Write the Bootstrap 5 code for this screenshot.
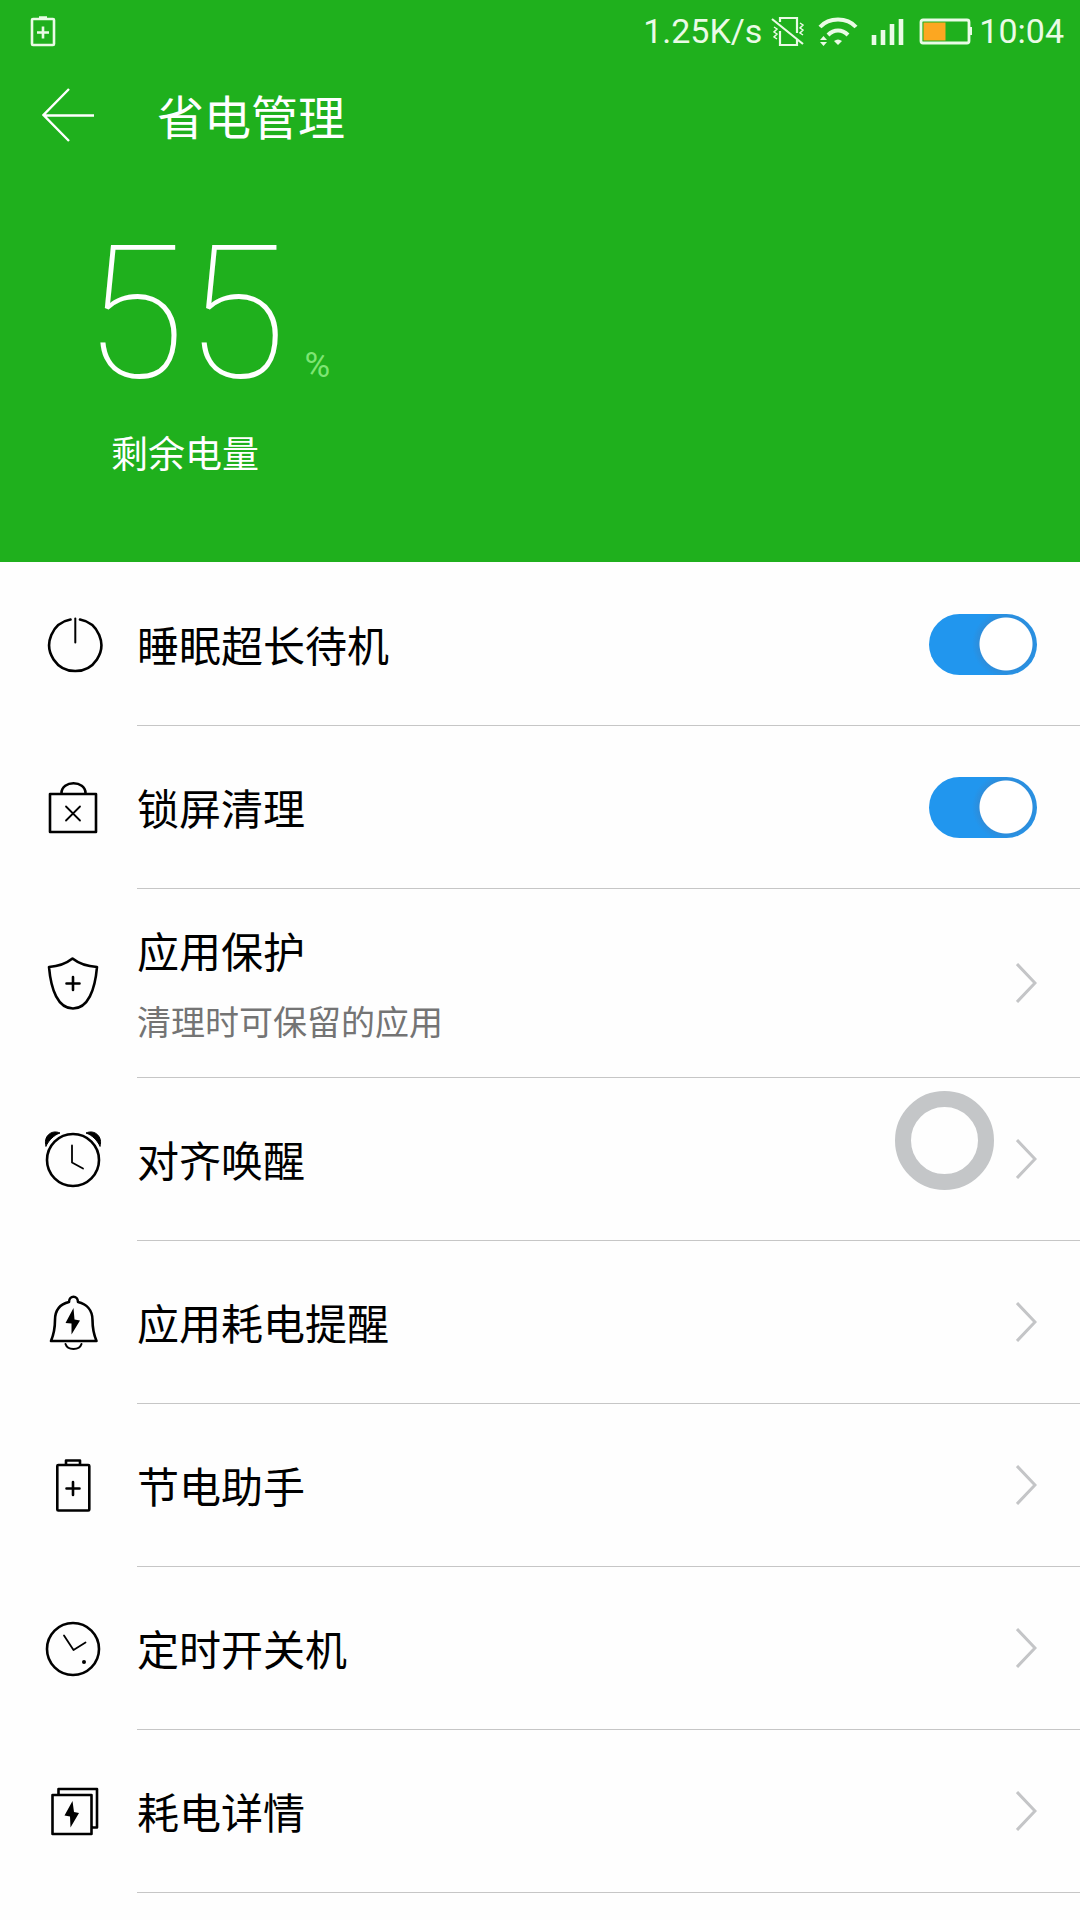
<!DOCTYPE html>
<html lang="zh-CN">
<head>
<meta charset="utf-8">
<meta name="viewport" content="width=device-width, initial-scale=1">
<title>省电管理</title>
<link href="https://cdn.jsdelivr.net/npm/bootstrap@5.3.0/dist/css/bootstrap.min.css" rel="stylesheet">
<style>
  body { font-family: "Noto Sans CJK SC", sans-serif; background: #fefefe; color: #000; }
  svg { display: block; flex: none; fill: none; stroke: currentColor; }
  .power-head { background: #1fb01d; color: #fff; }
  .status-bar { height: 62px; padding: 0 16px 0 30px; font-family: Roboto, sans-serif; font-size: 34px; line-height: 40px; color: #eafbe6; }
  .vibrate { margin-left: 7px; }
  .wifi { margin-left: 10px; }
  .signal { margin-left: 12px; }
  .battery { margin: 0 6px 0 14px; }
  .title-bar { height: 106px; padding-left: 42px; gap: 63px; }
  .title-bar h1 { font-size: 47px; line-height: 64px; }
  .summary { padding: 53px 84px 84px; font-family: Roboto, sans-serif; }
  .level { font-size: 185px; line-height: 185px; font-weight: 100; }
  .percent { font-size: 35px; line-height: 40px; color: #7ee573; margin-left: 18px; }
  .caption-text { font-family: "Noto Sans CJK SC", sans-serif; font-size: 37px; line-height: 52px; margin-top: 20px; padding-left: 27px; }
  .settings { padding-top: 1px; }
  .setting { padding-left: 43px; gap: 34px; color: #000; text-decoration: none; }
  .setting-body { min-height: 163px; padding: 27px 43px 27px 0; border-bottom: 1px solid #c6c6c6; }
  .setting-name { font-size: 42px; line-height: 68px; }
  .setting-note { font-size: 34px; line-height: 50px; padding: 12px 0 4px; color: #747474; }
  .icon { width: 60px; height: 60px; margin-bottom: 1px; stroke-width: 2.6; stroke-linecap: round; stroke-linejoin: round; }
  .chevron { color: #c4c5c7; stroke-width: 3; }
  .form-check-input.toggle, .form-check-input.toggle:checked {
    width: 108px; height: 61px; margin: 0; border: 0; border-radius: 31px; flex: none; box-shadow: none;
    background: radial-gradient(circle at 77px 30px, #fff 26px, #2d8ddb 27px, #2196ee 34px) #2196ee;
  }
  .touch-ball { position: absolute; top: 1091px; right: 86px; width: 99px; height: 99px; padding: 0; border: 16px solid #c4c6c8; border-radius: 50%; background: #fefefe; }
</style>
</head>
<body class="position-relative">
<header class="power-head">
  <div class="status-bar d-flex align-items-center justify-content-between">
    <svg width="26" height="32" viewBox="0 0 26 32" stroke-width="2.6"><rect x="2" y="4" width="22" height="26" rx="1"/><path d="M9 2.500h8M7 17.500h12M13 11.500v12" /></svg>
    <div class="d-flex align-items-center">
      <span>1.25K/s</span>
      <svg class="vibrate" width="38" height="34" viewBox="0 0 38 34" stroke-width="2.2"><path d="M11 8V4h17v15M28 25v6H11V17M3 5l31 25"/><path stroke-width="1.500" d="M5 13l3 2-3 3 3 2-3 3 3 2M31 9l3 2-3 3 3 2-3 3 3 2"/></svg>
      <svg class="wifi" width="42" height="34" viewBox="0 0 42 34" stroke-width="4"><path d="M3 13c9-10 27-10 36 0M11 21c6-6 14-6 20 0"/><path stroke="none" fill="currentColor" d="M17 27q4-3 8 0l-4 4zM3 26l3.500-4 3.500 4zM3 28l3.500 4 3.500-4z"/></svg>
      <svg class="signal" width="34" height="34" viewBox="0 0 34 34" stroke-width="4.600"><path d="M3 31V21M12 31V16M21 31V10M30 31V5"/></svg>
      <svg class="battery" width="54" height="34" viewBox="0 0 54 34"><rect x="2" y="6" width="48" height="23" rx="2" stroke-width="2.800"/><rect x="4.500" y="8.500" width="22" height="18" fill="#fca721" stroke="none"/><path stroke-width="3" d="M51.500 13v8"/></svg>
      <span>10:04</span>
    </div>
  </div>
  <nav class="title-bar d-flex align-items-center" aria-label="标题">
    <a href="#" class="text-white" aria-label="返回"><svg width="52" height="54" viewBox="0 0 52 54" stroke-width="2.400"><path d="M27 1L1.500 27 27 53M1.500 27.500H52"/></svg></a>
    <h1 class="m-0 fw-normal">省电管理</h1>
  </nav>
  <section class="summary">
    <div class="d-flex align-items-baseline"><span class="level">55</span><span class="percent">%</span></div>
    <div class="caption-text">剩余电量</div>
  </section>
</header>
<main class="settings">
  <div class="setting d-flex align-items-center">
    <svg class="icon" viewBox="0 0 60 60"><path d="M27.500 5.500A26 26 0 1 0 37 5.500"/><path stroke-width="2" d="M32.300 4.500v24"/></svg>
    <div class="setting-body d-flex flex-grow-1 align-items-center justify-content-between">
      <label class="setting-name" for="sleep">睡眠超长待机</label>
      <input class="form-check-input toggle" type="checkbox" role="switch" id="sleep" checked>
    </div>
  </div>
  <div class="setting d-flex align-items-center">
    <svg class="icon" viewBox="0 0 60 60"><path d="M7 17h46v38H7zM18.500 16c0-13 24-13 24 0"/><path stroke-width="1.800" d="M23 29.500l14 14M37 29.500l-14 14"/></svg>
    <div class="setting-body d-flex flex-grow-1 align-items-center justify-content-between">
      <label class="setting-name" for="lock">锁屏清理</label>
      <input class="form-check-input toggle" type="checkbox" role="switch" id="lock" checked>
    </div>
  </div>
  <a href="#" class="setting d-flex align-items-center">
    <svg class="icon" viewBox="0 0 60 60"><path d="M29.500 5.500Q20 13 6 14C8 37 15 55.500 30 55.500S52 37 54 14Q39 13 29.500 5.500z"/><path d="M23.500 30.500h13M30 24v13"/></svg>
    <div class="setting-body d-flex flex-grow-1 align-items-center justify-content-between">
      <div><div class="setting-name">应用保护</div><div class="setting-note">清理时可保留的应用</div></div>
      <svg class="chevron" width="21" height="40" viewBox="0 0 21 40"><path d="M1 1l18 19L1 39"/></svg>
    </div>
  </a>
  <a href="#" class="setting d-flex align-items-center">
    <svg class="icon" viewBox="0 0 60 60"><circle cx="30" cy="31" r="26"/><path stroke-width="1.800" d="M29 16.500v17L40 39.500"/><path fill="#000" stroke-width="1" d="M3 17C0 8 8 0 17 4 11 6 6 11 3 17zM57 17C60 8 52 0 43 4c6 2 11 7 14 13z"/></svg>
    <div class="setting-body d-flex flex-grow-1 align-items-center justify-content-between">
      <span class="setting-name">对齐唤醒</span>
      <svg class="chevron" width="21" height="40" viewBox="0 0 21 40"><path d="M1 1l18 19L1 39"/></svg>
    </div>
  </a>
  <a href="#" class="setting d-flex align-items-center">
    <svg class="icon" viewBox="0 0 60 60"><path d="M8 49h45.500C51 43 49.500 38 49.500 28c0-10-6-16-14.500-18 0-7-9-7-9 0C17.500 12 12 18 12 28c0 10-1.500 15-4 21z"/><path stroke-width="2" d="M22.500 52c2 6.500 14 6.500 16 0"/><path fill="#000" stroke="none" d="M30.500 16l-8 15 6 .5v11l8.500-14-5.500-1z"/></svg>
    <div class="setting-body d-flex flex-grow-1 align-items-center justify-content-between">
      <span class="setting-name">应用耗电提醒</span>
      <svg class="chevron" width="21" height="40" viewBox="0 0 21 40"><path d="M1 1l18 19L1 39"/></svg>
    </div>
  </a>
  <a href="#" class="setting d-flex align-items-center">
    <svg class="icon" viewBox="0 0 60 60"><rect x="14.300" y="10" width="32" height="45.500" rx="1"/><path d="M23 9V5.500h14V9M23.500 33.500h13M30 27v13"/></svg>
    <div class="setting-body d-flex flex-grow-1 align-items-center justify-content-between">
      <span class="setting-name">节电助手</span>
      <svg class="chevron" width="21" height="40" viewBox="0 0 21 40"><path d="M1 1l18 19L1 39"/></svg>
    </div>
  </a>
  <a href="#" class="setting d-flex align-items-center">
    <svg class="icon" viewBox="0 0 60 60"><circle cx="30" cy="31" r="26"/><path stroke-width="1.800" d="M21 17.500L30.500 32l12-7.500"/><circle cx="41" cy="44" r="2" fill="#000" stroke="none"/></svg>
    <div class="setting-body d-flex flex-grow-1 align-items-center justify-content-between">
      <span class="setting-name">定时开关机</span>
      <svg class="chevron" width="21" height="40" viewBox="0 0 21 40"><path d="M1 1l18 19L1 39"/></svg>
    </div>
  </a>
  <a href="#" class="setting d-flex align-items-center">
    <svg class="icon" viewBox="0 0 60 60"><path d="M9.500 14h39v39h-39zM15.500 13V8h38.500v38.500H50"/><path fill="#000" stroke="none" d="M29.500 20l-8 14.500 5.500 1 .5 11L36 32l-5-1z"/></svg>
    <div class="setting-body d-flex flex-grow-1 align-items-center justify-content-between">
      <span class="setting-name">耗电详情</span>
      <svg class="chevron" width="21" height="40" viewBox="0 0 21 40"><path d="M1 1l18 19L1 39"/></svg>
    </div>
  </a>
</main>
<button type="button" class="touch-ball" aria-label="悬浮球"></button>
<script src="https://cdn.jsdelivr.net/npm/bootstrap@5.3.0/dist/js/bootstrap.bundle.min.js"></script>
</body>
</html>
